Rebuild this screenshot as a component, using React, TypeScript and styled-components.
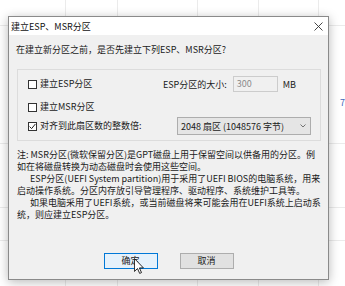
import React from "react";
import styled, { createGlobalStyle } from "styled-components";

const GlobalStyle = createGlobalStyle`
  html, body { margin: 0; padding: 0; }
  body {
    background: #ffffff;
    font-family: "Noto Sans CJK SC", "Noto Sans", sans-serif;
    -webkit-font-smoothing: antialiased;
  }
  * { box-sizing: border-box; }
`;

const line = "linear-gradient(#ebebeb, #ebebeb)";
const vx = [65, 117, 197, 258, 318];
const hy = [25, 143, 207, 240];

const Page = styled.div`
  position: relative;
  width: 345px;
  height: 286px;
  overflow: hidden;
  padding: 16px 0 0 8px;
  background-color: #ffffff;
  background-image: ${[...vx, ...hy].map(() => line).join(", ")};
  background-repeat: no-repeat;
  background-size: ${[...vx.map(() => "1px 100%"), ...hy.map(() => "100% 1px")].join(", ")};
  background-position: ${[...vx.map((x) => `${x}px 0`), ...hy.map((y) => `0 ${y}px`)].join(", ")};
`;

const PageMark = styled.span`
  position: absolute;
  left: 340px;
  top: 97px;
  font-size: 9px;
  line-height: 12px;
  color: #3d66b8;
`;

const Window = styled.div`
  width: 321px;
  height: 264px;
  border: 1px solid #8a8a8a;
  background: #f0f0f0;
  box-shadow: 0 2px 10px rgba(0, 0, 0, 0.28);
  display: flex;
  flex-direction: column;
  position: relative;
`;

const TitleBar = styled.div`
  height: 18px;
  background: #ffffff;
  display: flex;
  align-items: center;
  justify-content: space-between;
  padding: 0 5px 0 2px;
  font-size: 9px;
  color: #111;
`;

const CloseIcon = styled.svg`
  width: 9px;
  height: 9px;
  display: block;
`;

const Body = styled.div`
  flex: 1;
  padding-top: 9px;
  font-size: 9px;
  color: #1a1a1a;
`;

const Question = styled.div`
  margin-left: 7px;
  line-height: 12px;
  white-space: nowrap;
`;

const GroupBox = styled.div`
  margin: 13px 7px 0 8px;
  height: 72px;
  border: 1px solid #dcdcdc;
  padding: 6px 0 0 10px;
`;

const Row = styled.div<{ $gap: number; $h: number }>`
  display: flex;
  align-items: center;
  height: ${(p) => p.$h}px;
  margin-top: ${(p) => p.$gap}px;
  white-space: nowrap;
`;

const CheckLabel = styled.label`
  display: flex;
  align-items: center;
  gap: 3px;
  line-height: 12px;
`;

const Box = styled.span`
  width: 9px;
  height: 9px;
  border: 1px solid #333;
  background: #fff;
  display: inline-flex;
  align-items: center;
  justify-content: center;
`;

const RightBlock = styled.div<{ $right: number }>`
  margin-left: auto;
  margin-right: ${(p) => p.$right}px;
  display: flex;
  align-items: center;
`;

const SizeInput = styled.div`
  width: 45px;
  height: 16px;
  margin-left: 6px;
  border: 1px solid #cccccc;
  background: #f0f0f0;
  color: #8a8a8a;
  padding-left: 3px;
  line-height: 14px;
`;

const Unit = styled.span`
  margin-left: 5px;
`;

const Combo = styled.div`
  width: 134px;
  height: 18px;
  border: 1px solid #adadad;
  background: #e5e5e5;
  display: flex;
  align-items: center;
  justify-content: space-between;
  padding: 0 4px 0 3px;
`;

const Note = styled.div`
  margin: 8px 0 0 8px;
  line-height: 12px;
`;

const NoteLine = styled.div<{ $indent?: boolean }>`
  white-space: nowrap;
  padding-left: ${(p) => (p.$indent ? 13 : 0)}px;
`;

const Buttons = styled.div`
  margin-top: 32px;
  display: flex;
  justify-content: center;
  gap: 22px;
`;

const Button = styled.div<{ $primary?: boolean }>`
  width: 54px;
  height: 16px;
  border: 1px solid ${(p) => (p.$primary ? "#0078d7" : "#adadad")};
  background: ${(p) => (p.$primary ? "#e5f1fb" : "#e1e1e1")};
  display: flex;
  align-items: center;
  justify-content: center;
  line-height: 12px;
  color: #1a1a1a;
`;

const Cursor = styled.svg`
  position: absolute;
  left: 125px;
  top: 241px;
  width: 10px;
  height: 16px;
`;

const Check = ({ checked }: { checked?: boolean }) => (
  <Box>
    {checked && (
      <svg width="7" height="7" viewBox="0 0 7 7">
        <path d="M0.6 3.6 L2.6 5.6 L6.4 1" fill="none" stroke="#222" strokeWidth="1" />
      </svg>
    )}
  </Box>
);

export default function App() {
  return (
    <>
      <GlobalStyle />
      <Page>
        <PageMark>7</PageMark>
        <Window>
          <TitleBar>
            <span>建立ESP、MSR分区</span>
            <CloseIcon viewBox="0 0 9 9">
              <path d="M0.5 0.5 L8.5 8.5 M8.5 0.5 L0.5 8.5" stroke="#333" strokeWidth="0.9" />
            </CloseIcon>
          </TitleBar>
          <Body>
            <Question>在建立新分区之前，是否先建立下列ESP、MSR分区?</Question>
            <GroupBox>
              <Row $gap={0} $h={16}>
                <CheckLabel>
                  <Check />
                  建立ESP分区
                </CheckLabel>
                <RightBlock $right={24}>
                  <span>ESP分区的大小:</span>
                  <SizeInput>300</SizeInput>
                  <Unit>MB</Unit>
                </RightBlock>
              </Row>
              <Row $gap={7} $h={16}>
                <CheckLabel>
                  <Check />
                  建立MSR分区
                </CheckLabel>
              </Row>
              <Row $gap={2} $h={18}>
                <CheckLabel>
                  <Check checked />
                  对齐到此扇区数的整数倍:
                </CheckLabel>
                <RightBlock $right={9}>
                  <Combo>
                    <span>2048 扇区 (1048576 字节)</span>
                    <svg width="6" height="4" viewBox="0 0 6 4">
                      <path d="M0.5 0.5 L3 3 L5.5 0.5" fill="none" stroke="#555" strokeWidth="0.8" />
                    </svg>
                  </Combo>
                </RightBlock>
              </Row>
            </GroupBox>
            <Note>
              <NoteLine>注: MSR分区(微软保留分区)是GPT磁盘上用于保留空间以供备用的分区。例</NoteLine>
              <NoteLine>如在将磁盘转换为动态磁盘时会使用这些空间。</NoteLine>
              <NoteLine $indent>ESP分区(UEFI System partition)用于采用了UEFI BIOS的电脑系统，用来</NoteLine>
              <NoteLine>启动操作系统。分区内存放引导管理程序、驱动程序、系统维护工具等。</NoteLine>
              <NoteLine $indent>如果电脑采用了UEFI系统，或当前磁盘将来可能会用在UEFI系统上启动系</NoteLine>
              <NoteLine>统，则应建立ESP分区。</NoteLine>
            </Note>
            <Buttons>
              <Button $primary>确定</Button>
              <Button>取消</Button>
            </Buttons>
          </Body>
          <Cursor viewBox="0 0 12 19">
            <path
              d="M0.5 0.5 L0.5 16 L4.2 12.6 L6.8 18.4 L9 17.4 L6.5 11.8 L11.3 11.8 Z"
              fill="#fff"
              stroke="#000"
              strokeWidth="1"
              strokeLinejoin="round"
            />
          </Cursor>
        </Window>
      </Page>
    </>
  );
}
